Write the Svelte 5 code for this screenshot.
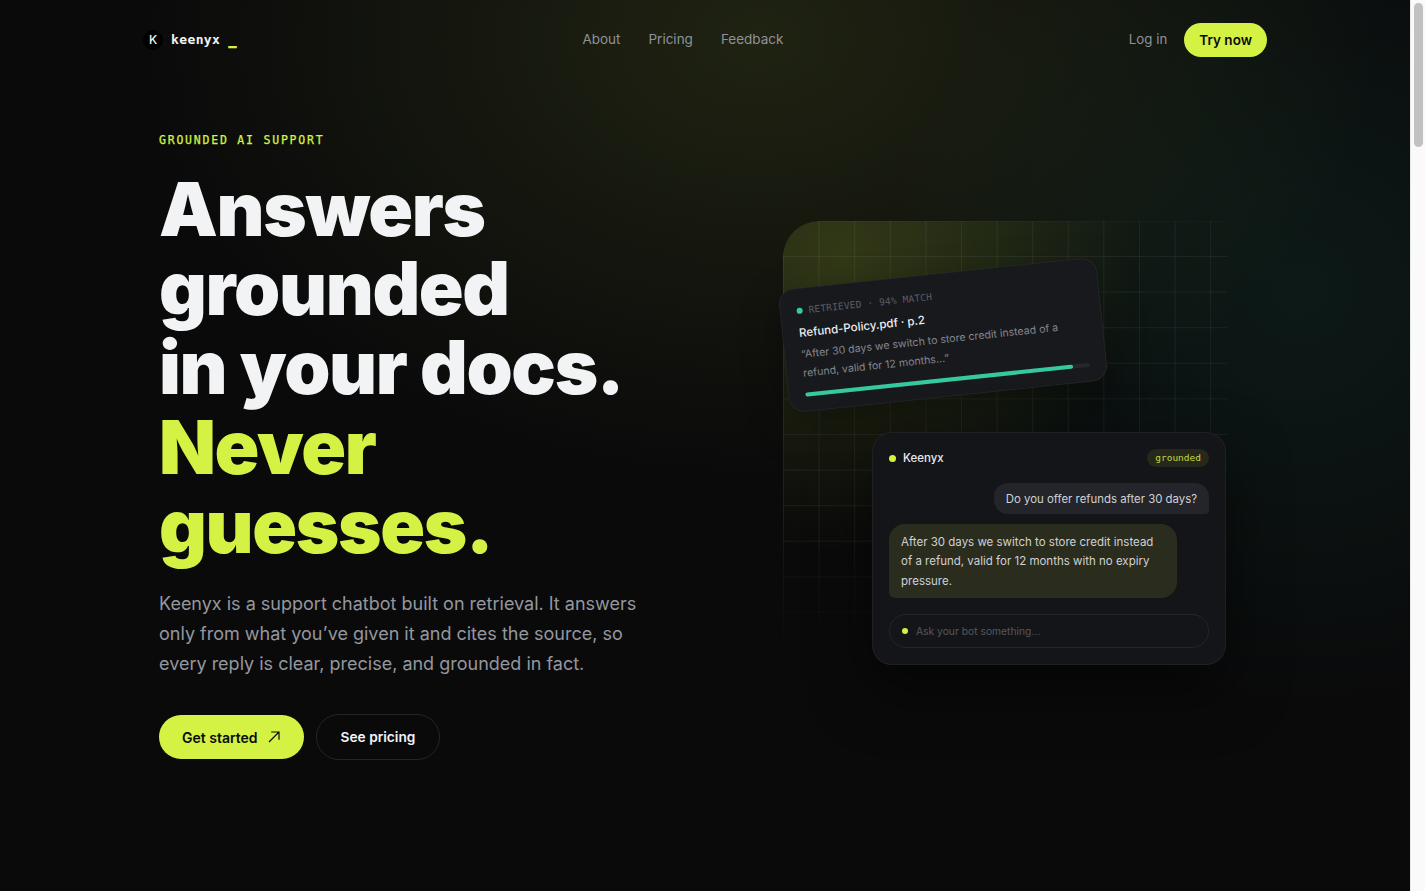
<script>
  const links = ['About', 'Pricing', 'Feedback'];
</script>

<div class="window">
  <main class="page">
    <header class="nav">
      <a class="logo" href="/">
        <span class="logo-mark">K</span>
        <span class="logo-word">keenyx</span>
        <span class="logo-cursor">_</span>
      </a>
      <nav class="nav-links">
        {#each links as link}
          <a href="/{link.toLowerCase()}">{link}</a>
        {/each}
      </nav>
      <div class="nav-actions">
        <a class="login" href="/login">Log in</a>
        <a class="try" href="/try">Try now</a>
      </div>
    </header>

    <section class="hero">
      <div class="copy">
        <p class="eyebrow">GROUNDED AI SUPPORT</p>
        <h1>Answers<br />grounded<br />in your docs.<br /><span>Never<br />guesses.</span></h1>
        <p class="lead">Keenyx is a support chatbot built on retrieval. It answers only from what you’ve given it and cites the source, so every reply is clear, precise, and grounded in fact.</p>
        <div class="cta">
          <a class="btn-primary" href="/start">
            Get started
            <svg width="12" height="12" viewBox="0 0 12 12" fill="none" stroke="currentColor" stroke-width="1.2">
              <path d="M1 11 11 1M3.2 1H11v7.8" />
            </svg>
          </a>
          <a class="btn-secondary" href="/pricing">See pricing</a>
        </div>
      </div>

      <div class="stage">
        <div class="grid-panel"></div>

        <div class="source-card">
          <div class="source-meta"><i></i>RETRIEVED · 94% MATCH</div>
          <div class="source-title">Refund-Policy.pdf · p.2</div>
          <p class="source-quote">“After 30 days we switch to store credit instead of a refund, valid for 12 months…”</p>
          <div class="track"><div class="fill" style="width: 94%"></div></div>
        </div>

        <div class="chat-card">
          <div class="chat-head">
            <span class="chat-name"><i></i>Keenyx</span>
            <span class="badge">grounded</span>
          </div>
          <div class="bubble user">Do you offer refunds after 30 days?</div>
          <div class="bubble bot">After 30 days we switch to store credit instead of a refund, valid for 12 months with no expiry pressure.</div>
          <div class="ask"><i></i>Ask your bot something…</div>
        </div>
      </div>
    </section>
  </main>

  <aside class="scrollbar"><div class="thumb"></div></aside>
</div>

<style>
  :global(body) {
    margin: 0;
    background: #0a0a0b;
    overflow: hidden;
  }

  .window {
    display: flex;
    height: 891px;
    font-family: Inter, "Noto Sans", sans-serif;
  }

  .page {
    flex: 1;
    min-width: 0;
    overflow: hidden;
    background:
      radial-gradient(620px 440px at 760px 40px, rgba(205, 240, 70, 0.11), transparent 100%),
      radial-gradient(420px 420px at 1300px 290px, rgba(40, 190, 150, 0.085), transparent 100%),
      #0a0a0b;
  }

  a {
    text-decoration: none;
    color: inherit;
  }

  i {
    display: block;
    border-radius: 50%;
    background: #d4f244;
  }

  /* Nav */
  .nav {
    display: flex;
    align-items: center;
    justify-content: space-between;
    width: 1124px;
    height: 34px;
    margin: 0 auto;
    padding-top: 23px;
  }

  .logo {
    display: flex;
    align-items: center;
    width: 94px;
    padding-bottom: 1px;
  }

  .logo-mark {
    display: grid;
    place-items: center;
    width: 20px;
    height: 20px;
    border-radius: 50%;
    background: #000;
    color: #f2f3f5;
    font-size: 12px;
    font-weight: 500;
  }

  .logo-word {
    margin-left: 8px;
    color: #f2f3f5;
    font-family: "DejaVu Sans Mono", monospace;
    font-size: 13px;
    font-weight: 700;
    letter-spacing: 0.03em;
  }

  .logo-cursor {
    margin-left: 8px;
    color: #d4f244;
    font-family: "DejaVu Sans Mono", monospace;
    font-size: 14px;
    font-weight: 700;
    text-shadow: 0 -1px 0 #d4f244;
  }

  .nav-links {
    display: flex;
    gap: 28px;
    padding-bottom: 2px;
    color: #8f9298;
    font-size: 13.5px;
  }

  .nav-actions {
    display: flex;
    align-items: center;
    justify-content: flex-end;
    gap: 17px;
  }

  .login {
    padding-bottom: 2px;
    color: #8f9298;
    font-size: 13.3px;
  }

  .try {
    padding: 8px 15px;
    border-radius: 999px;
    background: #d4f244;
    color: #0a0a0b;
    font-size: 13.5px;
    font-weight: 600;
    line-height: 18px;
  }

  /* Hero */
  .hero {
    display: flex;
    justify-content: space-between;
    width: 1068px;
    margin: 0 auto 0 159px;
    padding-top: 76px;
  }

  .copy {
    width: 500px;
  }

  .eyebrow {
    margin: 0 0 23px;
    color: #d4f244;
    font-family: "DejaVu Sans Mono", monospace;
    font-size: 11.5px;
    line-height: 14px;
    letter-spacing: 0.155em;
    -webkit-text-stroke: 0.25px #d4f244;
  }

  h1 {
    margin: 0 0 23px;
    color: #f2f3f5;
    font-size: 74px;
    font-weight: 860;
    line-height: 79.2px;
    letter-spacing: -0.018em;
    white-space: nowrap;
  }

  h1 span {
    color: #d4f244;
  }

  .lead {
    margin: 0 0 35px;
    color: #94979e;
    font-size: 18px;
    line-height: 30px;
  }

  .cta {
    display: flex;
    align-items: center;
    gap: 12px;
  }

  .btn-primary {
    display: flex;
    align-items: center;
    gap: 10px;
    height: 44px;
    padding: 0 24px 0 23px;
    border-radius: 999px;
    background: #d4f244;
    color: #0a0a0b;
    font-size: 14px;
    font-weight: 600;
  }

  .btn-secondary {
    display: flex;
    align-items: center;
    height: 44px;
    padding: 0 24px;
    border: 1px solid #24252a;
    border-radius: 999px;
    color: #f2f3f5;
    font-size: 13.7px;
    font-weight: 600;
  }

  /* Visual */
  .stage {
    position: relative;
    width: 444px;
    height: 443px;
    margin-top: 88px;
  }

  .grid-panel {
    position: absolute;
    inset: 0;
    border-radius: 36px 0 0 0;
    background:
      linear-gradient(rgba(255, 255, 255, 0.06) 1px, transparent 1px) 0 35px / 35.6px 35.6px,
      linear-gradient(90deg, rgba(255, 255, 255, 0.06) 1px, transparent 1px) 35.6px 0 / 35.6px 35.6px,
      radial-gradient(300px 300px at 60px 40px, rgba(205, 240, 70, 0.16), transparent 100%);
    -webkit-mask-image: linear-gradient(to bottom, #000 70%, transparent 100%);
    mask-image: linear-gradient(to bottom, #000 70%, transparent 100%);
  }

  .source-card {
    position: absolute;
    left: 0;
    top: 52px;
    box-sizing: border-box;
    width: 320px;
    height: 124px;
    padding: 15px 16px 0;
    border: 1px solid rgba(255, 255, 255, 0.05);
    border-radius: 16px;
    background: #18191d;
    box-shadow: 0 16px 40px rgba(0, 0, 0, 0.35);
    transform: rotate(-6deg);
  }

  .source-meta {
    display: flex;
    align-items: center;
    gap: 6px;
    color: #5b5e64;
    font-family: "DejaVu Sans Mono", monospace;
    font-size: 9.5px;
    line-height: 14px;
    letter-spacing: 0.02em;
  }

  .source-meta i {
    width: 6px;
    height: 6px;
    background: #35c9a0;
  }

  .source-title {
    margin-top: 6px;
    color: #eeeff1;
    font-size: 11.5px;
    font-weight: 500;
    line-height: 18px;
  }

  .source-quote {
    margin: 3px 0 0;
    color: #83868c;
    font-size: 10.6px;
    line-height: 19px;
  }

  .track {
    height: 4px;
    margin-top: 10px;
    border-radius: 4px;
    background: #26272c;
  }

  .fill {
    height: 100%;
    border-radius: 4px;
    background: #35c9a0;
  }

  .chat-card {
    position: absolute;
    left: 89px;
    top: 211px;
    box-sizing: border-box;
    display: flex;
    flex-direction: column;
    width: 354px;
    height: 233px;
    padding: 16px;
    border: 1px solid rgba(255, 255, 255, 0.05);
    border-radius: 20px;
    background: #141518;
    box-shadow: 0 24px 60px rgba(0, 0, 0, 0.5);
  }

  .chat-head {
    display: flex;
    align-items: center;
    justify-content: space-between;
    height: 20px;
  }

  .chat-name {
    display: flex;
    align-items: center;
    gap: 7px;
    color: #e8e9ec;
    font-size: 11.5px;
    font-weight: 500;
  }

  .chat-name i {
    width: 7px;
    height: 7px;
  }

  .badge {
    padding: 2px 8px;
    border-radius: 999px;
    background: #25281a;
    color: #c2dc42;
    font-family: "DejaVu Sans Mono", monospace;
    font-size: 9.5px;
    line-height: 14px;
  }

  .bubble {
    box-sizing: border-box;
    color: #d0d1d4;
    font-size: 11.5px;
  }

  .user {
    align-self: flex-end;
    margin-top: 15px;
    padding: 8px 12px 6px;
    border-radius: 14px 14px 4px 14px;
    background: #24252a;
    font-size: 11.4px;
    line-height: 17px;
  }

  .bot {
    width: 288px;
    margin-top: 10px;
    padding: 9px 12px 7px;
    border-radius: 16px 16px 16px 6px;
    background: #2a2c1e;
    line-height: 19.4px;
  }

  .ask {
    display: flex;
    align-items: center;
    gap: 8px;
    height: 34px;
    margin-top: 16px;
    padding: 0 12px;
    border: 1px solid #24252a;
    border-radius: 999px;
    color: #55585e;
    font-size: 10.3px;
  }

  .ask i {
    width: 6px;
    height: 6px;
  }

  /* Scrollbar */
  .scrollbar {
    flex: none;
    box-sizing: border-box;
    width: 15px;
    padding: 3px 2px 0 3px;
    background: #fafafa;
    border-left: 1px solid #e8e8e8;
  }

  .thumb {
    height: 144px;
    border-radius: 5px;
    background: #c1c1c1;
  }
</style>
